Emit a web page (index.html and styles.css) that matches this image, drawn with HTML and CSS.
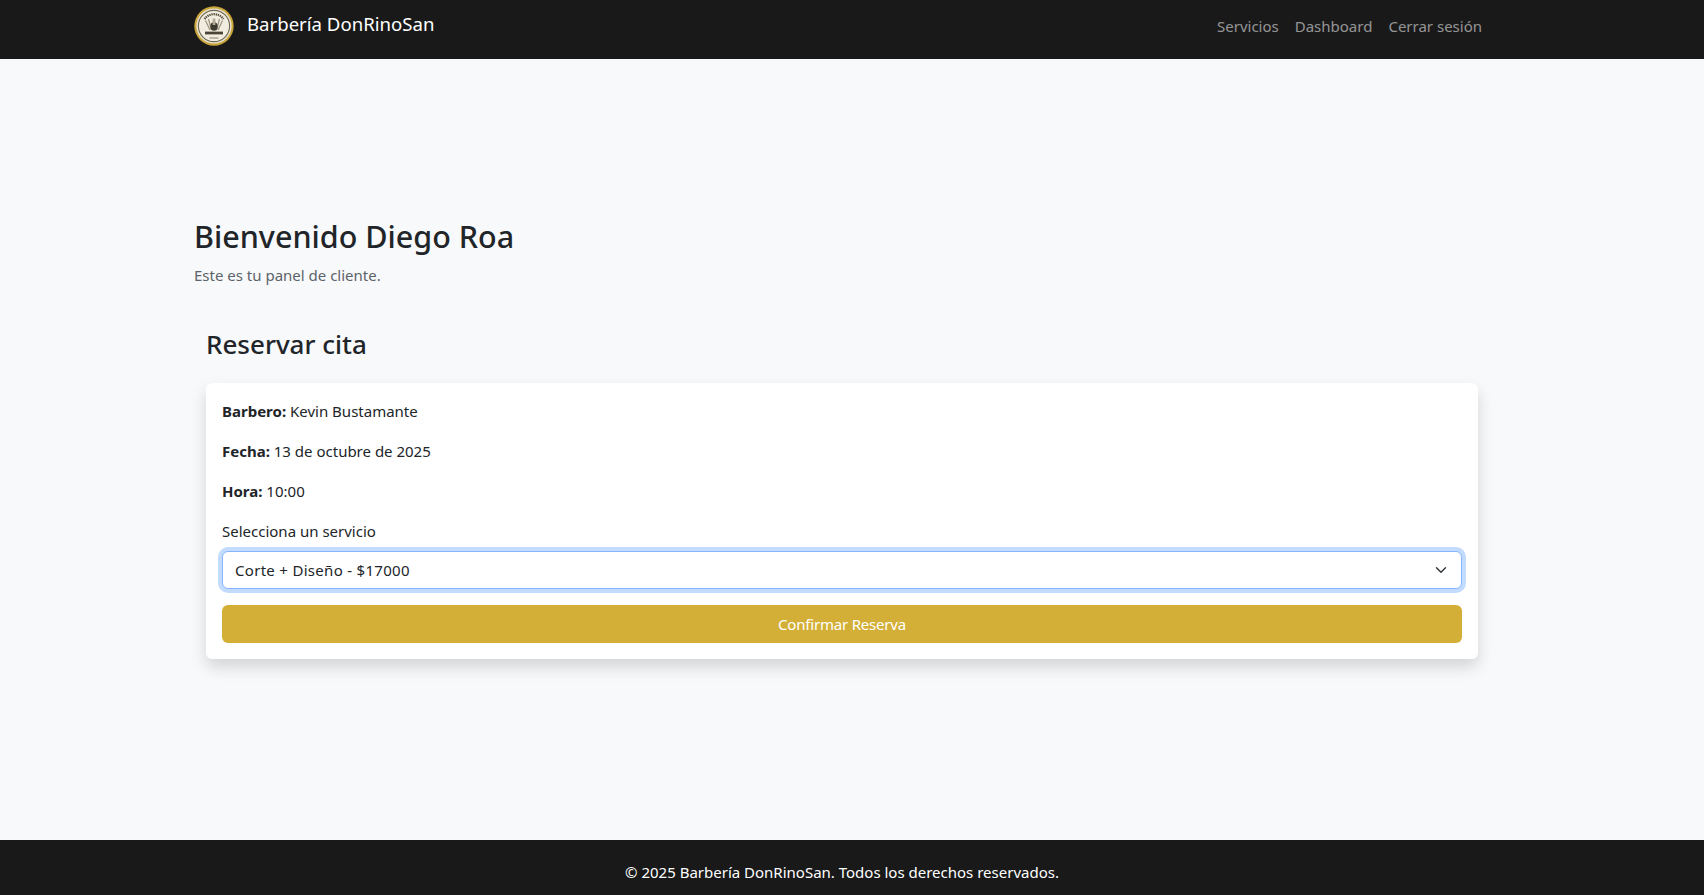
FILE: index.html
```html
<!DOCTYPE html>
<html lang="es">
<head>
<meta charset="utf-8">
<title>Barbería DonRinoSan</title>
<link rel="stylesheet" href="styles.css">
</head>
<body>
<nav class="navbar">
  <div class="container nav-inner">
    <a class="brand" href="#">
      <svg class="logo" viewBox="0 0 40 40" aria-hidden="true">
        <circle cx="20" cy="20" r="19.7" fill="#c9a63a"/>
        <circle cx="20" cy="20" r="17.6" fill="#e9e3d2"/>
        <circle cx="20" cy="20" r="15.6" fill="#f0ecdf" stroke="#6f6754" stroke-width="1.1"/>
        <path d="M10.5 13a11.8 11.8 0 0 1 19 0" fill="none" stroke="#4f4838" stroke-width="2.2" stroke-dasharray="1.3 .8"/>
        <path d="M11.5 14.5l4.5 9.5M28.5 14.5l-4.5 9.5M14.5 13l3 11M25.5 13l-3 11" stroke="#9b917b" stroke-width="1.2"/>
        <ellipse cx="20" cy="20.5" rx="3.6" ry="4.2" fill="#3f3a30"/>
        <rect x="18.6" y="12.5" width="2.8" height="6.5" fill="#b3a994"/>
        <rect x="8.5" y="25" width="23" height="4" fill="#f6f2e6"/>
        <rect x="11" y="25.6" width="18" height="2.8" fill="#4a4436"/>
        <path d="M15.5 32h9" stroke="#8a816d" stroke-width="1"/>
      </svg>
      <span class="brand-name">Barbería DonRinoSan</span>
    </a>
    <ul class="nav-links">
      <li><a href="#">Servicios</a></li>
      <li><a href="#">Dashboard</a></li>
      <li><a href="#">Cerrar sesión</a></li>
    </ul>
  </div>
</nav>
<main class="main">
  <div class="container">
    <h1 class="title">Bienvenido Diego Roa</h1>
    <p class="subtitle">Este es tu panel de cliente.</p>
    <section class="booking">
      <h2 class="booking-title">Reservar cita</h2>
      <form class="card">
        <p class="line"><strong>Barbero:</strong> Kevin Bustamante</p>
        <p class="line"><strong>Fecha:</strong> 13 de octubre de 2025</p>
        <p class="line"><strong>Hora:</strong> 10:00</p>
        <label class="label" for="servicio">Selecciona un servicio</label>
        <select class="select" id="servicio">
          <option>Corte + Diseño - $17000</option>
        </select>
        <button class="btn" type="button">Confirmar Reserva</button>
      </form>
    </section>
  </div>
</main>
<footer class="footer">
  <div class="container footer-inner">© 2025 Barbería DonRinoSan. Todos los derechos reservados.</div>
</footer>
</body>
</html>
```
FILE: styles.css
```css
* { box-sizing: border-box; }
html, body { height: 100%; }
body {
  margin: 0;
  min-height: 895px;
  display: flex;
  flex-direction: column;
  background: #f8f9fa;
  color: #212529;
  font-family: "Noto Sans", "Open Sans", sans-serif;
  font-size: 15px;
  line-height: 24px;
}
a { text-decoration: none; color: inherit; }
.container {
  width: 1320px;
  padding: 0 12px;
  margin-left: 182px;
}
.navbar { background: #191919; height: 59px; flex: none; }
.nav-inner { display: flex; justify-content: space-between; align-items: flex-start; }
.brand {
  display: flex;
  align-items: center;
  gap: 13px;
  color: #fff;
  font-size: 18.6px;
  padding-top: 6px;
}
.brand-name { position: relative; top: -2px; }
.logo { width: 40px; height: 40px; display: block; }
.nav-links { list-style: none; margin: 0; padding: 14px 0 0; display: flex; }
.nav-links a { display: block; padding: 0 8px; color: rgba(255,255,255,.55); }
.main { flex: 1; padding-top: 158px; }
.title { margin: 0 0 8px; font-size: 30.5px; font-weight: 500; line-height: 38px; }
.subtitle { margin: 0 0 40px; color: #5c636a; }
.booking { padding: 0 12px; }
.booking-title { margin: 0 0 22px; font-size: 26px; font-weight: 500; line-height: 34px; }
.card {
  display: block;
  padding: 16px;
  background: #fff;
  border-radius: 6px;
  box-shadow: 0 8px 16px rgba(0,0,0,.15);
}
.line { margin: 0 0 16px; }
.line strong { font-weight: 700; }
.label { display: block; margin-bottom: 8px; }
.select {
  display: block;
  width: 100%;
  height: 38px;
  margin-bottom: 16px;
  padding: 6px 36px 6px 12px;
  font: inherit;
  letter-spacing: .3px;
  color: #212529;
  background: #fff url("data:image/svg+xml,%3csvg xmlns='http://www.w3.org/2000/svg' viewBox='0 0 16 16'%3e%3cpath fill='none' stroke='%23343a40' stroke-linecap='round' stroke-linejoin='round' stroke-width='2' d='m2 5 6 6 6-6'/%3e%3c/svg%3e") no-repeat right 12px center / 16px 12px;
  border: 1px solid #86b7fe;
  border-radius: 6px;
  box-shadow: 0 0 0 4px rgba(13,110,253,.25);
  appearance: none;
  outline: 0;
}
.btn {
  display: block;
  width: 100%;
  height: 38px;
  padding: 6px 12px;
  font: inherit;
  letter-spacing: -.2px;
  color: #fff;
  background: #d4af37;
  border: 0;
  border-radius: 6px;
}
.footer { flex: none; height: 55px; background: #191919; color: #fff; }
.footer-inner { padding-top: 20px; text-align: center; }
```
